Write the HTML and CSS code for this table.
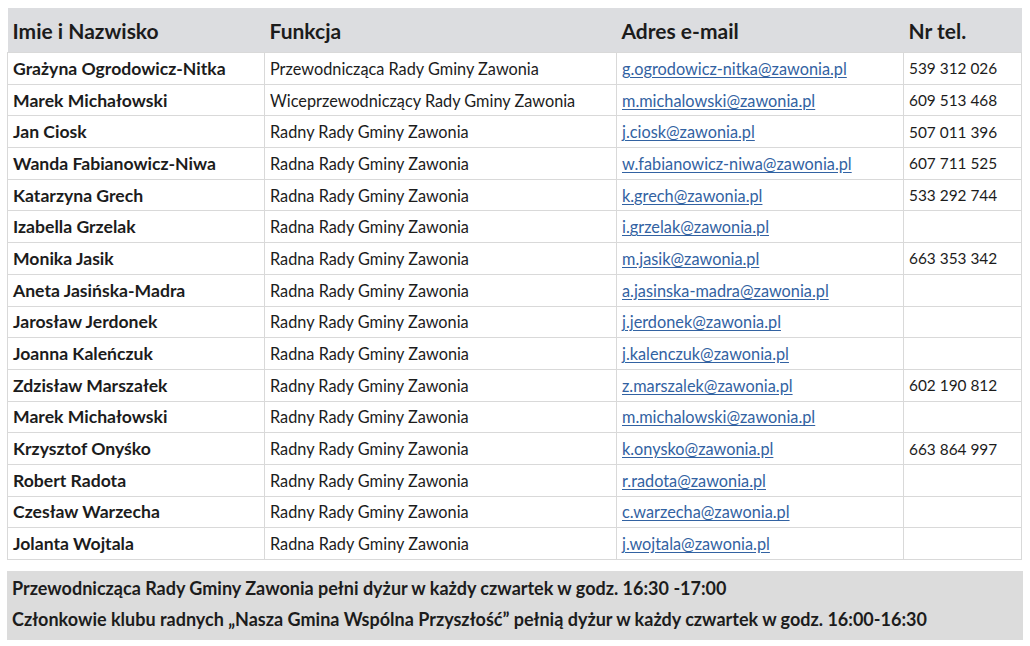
FILE: index.html
```html
<!DOCTYPE html>
<html lang="pl">
<head>
<meta charset="utf-8">
<title>Rada Gminy Zawonia</title>
<link rel="stylesheet" href="styles.css">
</head>
<body>
<div class="page">
<table class="council">
  <colgroup>
    <col class="c-name"><col class="c-func"><col class="c-mail"><col class="c-tel">
  </colgroup>
  <thead>
    <tr><th>Imie i Nazwisko</th><th>Funkcja</th><th>Adres e-mail</th><th>Nr tel.</th></tr>
  </thead>
  <tbody>
    <tr><td class="name">Grażyna Ogrodowicz-Nitka</td><td>Przewodnicząca Rady Gminy Zawonia</td><td><a href="#">g.ogrodowicz-nitka@zawonia.pl</a></td><td class="tel">539 312 026</td></tr>
    <tr><td class="name">Marek Michałowski</td><td>Wiceprzewodniczący Rady Gminy Zawonia</td><td><a href="#">m.michalowski@zawonia.pl</a></td><td class="tel">609 513 468</td></tr>
    <tr><td class="name">Jan Ciosk</td><td>Radny Rady Gminy Zawonia</td><td><a href="#">j.ciosk@zawonia.pl</a></td><td class="tel">507 011 396</td></tr>
    <tr><td class="name">Wanda Fabianowicz-Niwa</td><td>Radna Rady Gminy Zawonia</td><td><a href="#">w.fabianowicz-niwa@zawonia.pl</a></td><td class="tel">607 711 525</td></tr>
    <tr><td class="name">Katarzyna Grech</td><td>Radna Rady Gminy Zawonia</td><td><a href="#">k.grech@zawonia.pl</a></td><td class="tel">533 292 744</td></tr>
    <tr><td class="name">Izabella Grzelak</td><td>Radna Rady Gminy Zawonia</td><td><a href="#">i.grzelak@zawonia.pl</a></td><td class="tel"></td></tr>
    <tr><td class="name">Monika Jasik</td><td>Radna Rady Gminy Zawonia</td><td><a href="#">m.jasik@zawonia.pl</a></td><td class="tel">663 353 342</td></tr>
    <tr><td class="name">Aneta Jasińska-Madra</td><td>Radna Rady Gminy Zawonia</td><td><a href="#">a.jasinska-madra@zawonia.pl</a></td><td class="tel"></td></tr>
    <tr><td class="name">Jarosław Jerdonek</td><td>Radny Rady Gminy Zawonia</td><td><a href="#">j.jerdonek@zawonia.pl</a></td><td class="tel"></td></tr>
    <tr><td class="name">Joanna Kaleńczuk</td><td>Radna Rady Gminy Zawonia</td><td><a href="#">j.kalenczuk@zawonia.pl</a></td><td class="tel"></td></tr>
    <tr><td class="name">Zdzisław Marszałek</td><td>Radny Rady Gminy Zawonia</td><td><a href="#">z.marszalek@zawonia.pl</a></td><td class="tel">602 190 812</td></tr>
    <tr><td class="name">Marek Michałowski</td><td>Radny Rady Gminy Zawonia</td><td><a href="#">m.michalowski@zawonia.pl</a></td><td class="tel"></td></tr>
    <tr><td class="name">Krzysztof Onyśko</td><td>Radny Rady Gminy Zawonia</td><td><a href="#">k.onysko@zawonia.pl</a></td><td class="tel">663 864 997</td></tr>
    <tr><td class="name">Robert Radota</td><td>Radny Rady Gminy Zawonia</td><td><a href="#">r.radota@zawonia.pl</a></td><td class="tel"></td></tr>
    <tr><td class="name">Czesław Warzecha</td><td>Radny Rady Gminy Zawonia</td><td><a href="#">c.warzecha@zawonia.pl</a></td><td class="tel"></td></tr>
    <tr><td class="name">Jolanta Wojtala</td><td>Radna Rady Gminy Zawonia</td><td><a href="#">j.wojtala@zawonia.pl</a></td><td class="tel"></td></tr>
  </tbody>
</table>
<div class="notice">
  <p>Przewodnicząca Rady Gminy Zawonia pełni dyżur w każdy czwartek w godz. 16:30 -17:00</p>
  <p>Członkowie klubu radnych „Nasza Gmina Wspólna Przyszłość” pełnią dyżur w każdy czwartek w godz. 16:00-16:30</p>
</div>
</div>
</body>
</html>
```
FILE: styles.css
```css
html, body {
  margin: 0;
  padding: 0;
  background: #ffffff;
}
body {
  font-family: Lato, "Open Sans", "Liberation Sans", sans-serif;
  color: #1c1c1c;
}
.page {
  padding: 8px 9px 0 7px;
}
.council {
  width: 1014px;
  border-collapse: collapse;
  table-layout: fixed;
}
.c-name { width: 257px; }
.c-func { width: 352px; }
.c-mail { width: 287px; }
.c-tel  { width: 118px; }

.council th {
  background: #dcdde0;
  height: 44px;
  padding: 0 5px;
  text-align: left;
  font-size: 21px;
  font-weight: 700;
  vertical-align: middle;
  border: none;
}
.council td {
  height: 30.7px;
  padding: 0 5px;
  border: 1px solid #d9d9d9;
  font-size: 16.3px;
  white-space: nowrap;
  overflow: hidden;
  vertical-align: middle;
}
.council td.name {
  font-weight: 700;
  font-size: 17.6px;
}
.council td.tel {
  font-size: 15.4px;
}
.council a {
  color: #3262a2;
  text-decoration: underline;
  text-underline-offset: 2px;
}
.notice {
  margin-top: 11px;
  width: 1016px;
  background: #dcdcdc;
  padding: 2px 5px 5px;
  box-sizing: border-box;
}
.notice p {
  margin: 0;
  line-height: 31px;
  font-size: 18px;
  font-weight: 700;
}
```
